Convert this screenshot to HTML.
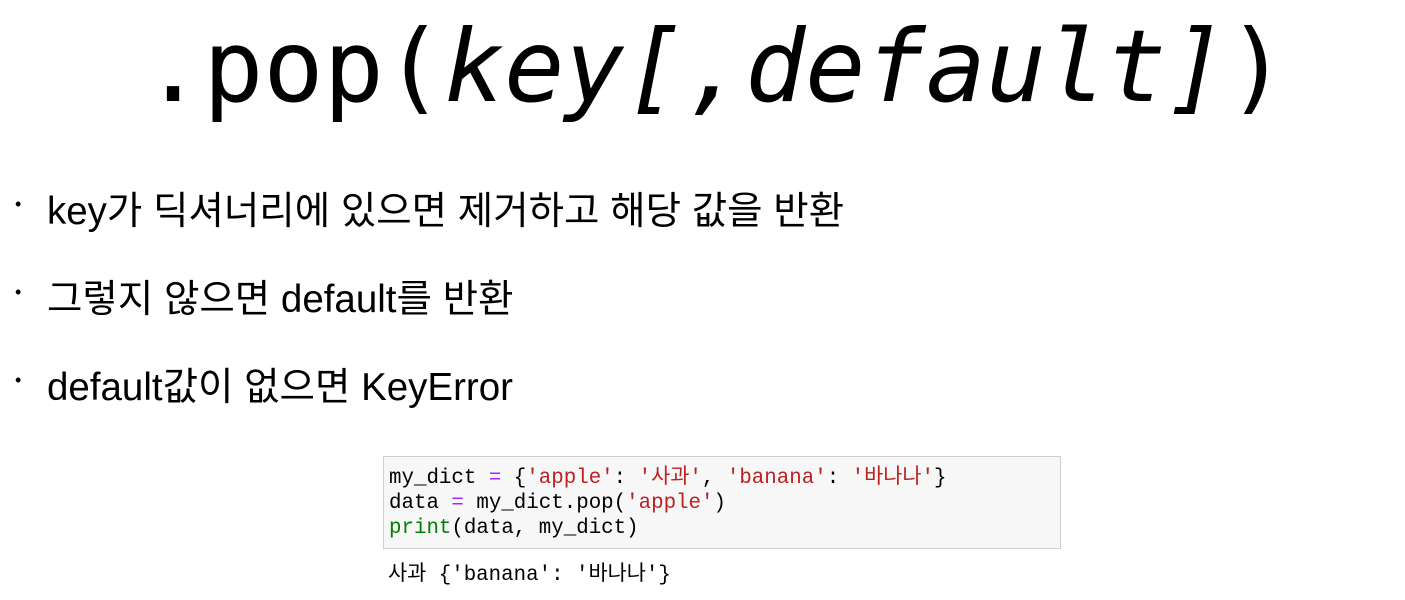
<!DOCTYPE html>
<html><head><meta charset="utf-8"><style>
body{margin:0;width:1405px;height:600px;background:#fff;position:relative;overflow:hidden;font-family:"Liberation Sans","Noto Sans CJK KR",sans-serif;color:#000}
.t{position:absolute;left:143px;top:8px;font-family:"DejaVu Sans Mono","Liberation Mono",monospace;font-size:100px;white-space:nowrap;letter-spacing:0px}
.t i{font-style:oblique}
.b{position:absolute;left:47px;font-size:38.5px;white-space:nowrap}
.b:before{content:"•";position:absolute;left:-32px;font-size:18px;top:14px}
.code{position:absolute;left:383px;top:456px;width:678px;height:93px;background:#f7f7f7;border:1px solid #cfcfcf;box-sizing:border-box}
pre{margin:0;font-family:"Liberation Mono","Noto Sans CJK KR",monospace;font-size:20.8px;line-height:25px;position:absolute;left:5px;top:9px}
.s{color:#ba2121}.o{color:#aa22ff}.g{color:#008000}
.out{position:absolute;left:388px;top:563px}
</style></head><body>
<div class="t">.pop(<i>key[,default]</i>)</div>
<div class="b" style="top:180px">key가 딕셔너리에 있으면 제거하고 해당 값을 반환</div>
<div class="b" style="top:268px">그렇지 않으면 default를 반환</div>
<div class="b" style="top:356px">default값이 없으면 KeyError</div>
<div class="code"><pre>my_dict <span class="o">=</span> {<span class="s">'apple'</span>: <span class="s">'사과'</span>, <span class="s">'banana'</span>: <span class="s">'바나나'</span>}
data <span class="o">=</span> my_dict.pop(<span class="s">'apple'</span>)
<span class="g">print</span>(data, my_dict)</pre></div>
<pre class="out">사과 {'banana': '바나나'}</pre>
</body></html>
